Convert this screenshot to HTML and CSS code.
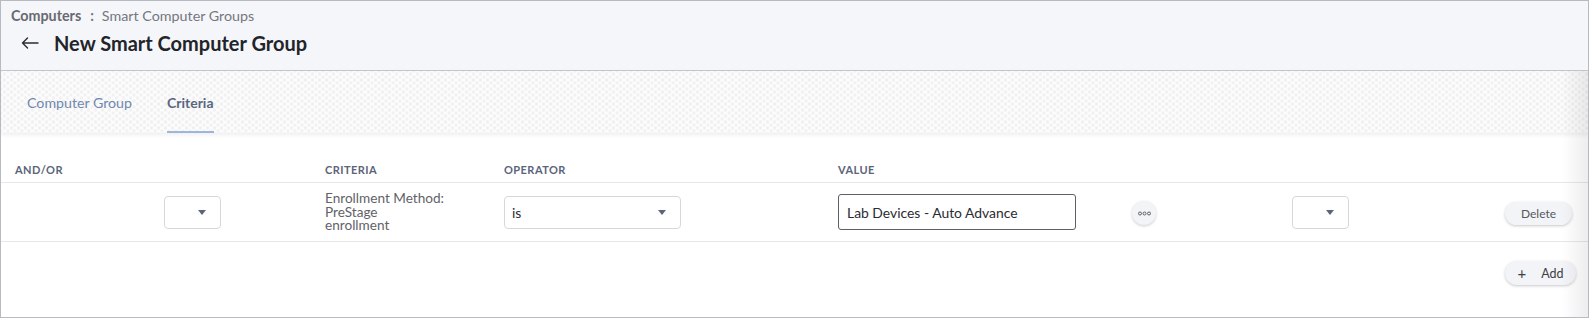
FILE: index.html
```html
<!DOCTYPE html>
<html>
<head>
    <title>New Smart Computer Group</title>
    <meta charset="UTF-8">
    <meta name="viewport" content="width=device-width, initial-scale=1.0">
    <link rel="stylesheet" href="styles.css">
</head>
<body>
    <div class="page">
        <header class="page-header">
            <div class="breadcrumb">
                <span class="crumb-root">Computers</span>
                <span class="crumb-sep">:</span>
                <span class="crumb-current">Smart Computer Groups</span>
            </div>
            <div class="title-row">
                <svg class="back-arrow" width="18" height="12" viewBox="0 0 18 12">
                    <path d="M17 6H1.5M6.5 1L1.5 6l5 5" fill="none" stroke="#2b2d31" stroke-width="1.4" stroke-linecap="round" stroke-linejoin="round"/>
                </svg>
                <h1>New Smart Computer Group</h1>
            </div>
        </header>

        <div class="content">
            <nav class="tabs">
                <a class="tab">Computer Group</a>
                <a class="tab tab-active">Criteria</a>
            </nav>

            <div class="criteria-table">
                <div class="table-head">
                    <div class="col-head">AND/OR</div>
                    <div class="col-head"></div>
                    <div class="col-head">Criteria</div>
                    <div class="col-head">Operator</div>
                    <div class="col-head">Value</div>
                    <div class="col-head"></div>
                    <div class="col-head"></div>
                    <div class="col-head"></div>
                </div>
                <div class="table-row">
                    <div class="cell"></div>
                    <div class="cell">
                        <div class="select select-small"><span class="caret"></span></div>
                    </div>
                    <div class="cell criteria-name">
                        <span>Enrollment Method:</span>
                        <span>PreStage</span>
                        <span>enrollment</span>
                    </div>
                    <div class="cell">
                        <div class="select select-wide"><span class="select-text">is</span><span class="caret"></span></div>
                    </div>
                    <div class="cell">
                        <div class="value-input">Lab Devices - Auto Advance</div>
                    </div>
                    <div class="cell">
                        <button class="more-btn">
                            <svg width="13" height="5" viewBox="0 0 13 5">
                                <circle cx="2" cy="2.5" r="1.5" fill="none" stroke="#5b5f68" stroke-width="1"/>
                                <circle cx="6.5" cy="2.5" r="1.5" fill="none" stroke="#5b5f68" stroke-width="1"/>
                                <circle cx="11" cy="2.5" r="1.5" fill="none" stroke="#5b5f68" stroke-width="1"/>
                            </svg>
                        </button>
                    </div>
                    <div class="cell">
                        <div class="select select-small"><span class="caret"></span></div>
                    </div>
                    <div class="cell">
                        <button class="pill-btn delete-btn">Delete</button>
                    </div>
                </div>
            </div>

            <div class="table-actions">
                <button class="pill-btn add-btn"><span class="plus">+</span>Add</button>
            </div>
        </div>
    </div>
</body>
</html>
```

FILE: styles.css
```css
:root {
    --header-bg: #f5f6fa;
    --frame-border: #b7bac0;
    --line: #e6e7eb;
    --text-dark: #222429;
    --text-muted: #5f6268;
    --slate: #5b6479;
    --tab-blue: #6f88ae;
    --tab-line: #9fb6da;
    --btn-bg: #f3f4f7;
}

* {
    margin: 0;
    padding: 0;
    box-sizing: border-box;
}

body {
    font-family: 'Lato', 'Liberation Sans', sans-serif;
    background: #ffffff;
    color: var(--text-dark);
}

.page {
    width: 1589px;
    height: 318px;
    border: 1px solid var(--frame-border);
    overflow: hidden;
    display: flex;
    flex-direction: column;
}

/* header */
.page-header {
    height: 70px;
    background: var(--header-bg);
    border-bottom: 1px solid #c3c7cf;
    padding: 7px 0 0 10px;
}

.breadcrumb {
    display: flex;
    align-items: center;
    font-size: 14.3px;
    line-height: 16px;
    color: #74777e;
}

.crumb-root {
    font-weight: 700;
    color: #676a71;
}

.crumb-sep {
    margin: 0 8px 0 9px;
    font-weight: 700;
}

.title-row {
    display: flex;
    align-items: center;
    margin-top: 5px;
    height: 28px;
}

.back-arrow {
    margin-left: 10px;
    margin-right: 15px;
}

h1 {
    font-size: 20px;
    font-weight: 700;
    color: #222429;
}

/* content */
.content {
    flex: 1;
    position: relative;
}

.content::after {
    content: '';
    position: absolute;
    top: 0;
    right: 0;
    bottom: 0;
    width: 26px;
    background: linear-gradient(to right, rgba(0, 0, 0, 0), rgba(0, 0, 0, 0.07));
    pointer-events: none;
}

.tabs {
    height: 62px;
    display: flex;
    gap: 35px;
    padding-left: 26px;
    background-color: #fcfcfc;
    background-image:
        radial-gradient(circle, #f1f1f1 1.4px, transparent 2px),
        radial-gradient(circle, #f1f1f1 1.4px, transparent 2px);
    background-size: 7px 6px;
    background-position: 0 0, 3.5px 3px;
    box-shadow: 0 2px 4px rgba(0, 0, 0, 0.07);
    position: relative;
}

.tab {
    display: flex;
    align-items: center;
    padding-top: 2px;
    font-size: 14.2px;
    color: var(--tab-blue);
    border-bottom: 2px solid transparent;
}

.tab-active {
    color: #5a6680;
    font-weight: 700;
    font-size: 14px;
    border-bottom-color: var(--tab-line);
}

/* table */
.table-head,
.table-row {
    display: grid;
    grid-template-columns: 149px 161px 179px 334px 294px 160px 213px 1fr;
    padding-left: 14px;
    border-bottom: 1px solid var(--line);
}

.table-head {
    height: 50px;
    align-items: end;
    padding-bottom: 5px;
}

.col-head {
    font-size: 11px;
    line-height: 14px;
    font-weight: 700;
    letter-spacing: 0.45px;
    text-transform: uppercase;
    color: var(--slate);
}

.table-row {
    height: 59px;
    align-items: center;
}

.cell {
    display: flex;
    align-items: center;
}

.criteria-name {
    flex-direction: column;
    align-items: flex-start;
    font-size: 13.6px;
    color: var(--text-muted);
    padding-top: 1px;
}

.criteria-name span {
    display: block;
    height: 13.5px;
    line-height: 13.5px;
}

.select {
    height: 33px;
    border: 1px solid #d6d8dd;
    border-radius: 4px;
    background: #ffffff;
    display: flex;
    align-items: center;
    justify-content: space-between;
    padding: 0 14px 0 7px;
}

.select-small {
    width: 57px;
    justify-content: flex-end;
}

.select-wide {
    width: 177px;
}

.select-text {
    font-size: 13.9px;
    color: #2a2c31;
}

.caret {
    width: 0;
    height: 0;
    border-left: 4.5px solid transparent;
    border-right: 4.5px solid transparent;
    border-top: 5px solid var(--slate);
    margin-top: 1px;
}

.value-input {
    width: 238px;
    height: 36px;
    border: 1px solid #5d6066;
    border-radius: 3px;
    display: flex;
    align-items: center;
    padding-left: 8px;
    font-size: 13.9px;
    color: #2a2c31;
}

.more-btn {
    width: 24px;
    height: 24px;
    border-radius: 50%;
    border: none;
    background: var(--btn-bg);
    box-shadow: 0 1px 3px rgba(0, 0, 0, 0.2);
    display: flex;
    align-items: center;
    justify-content: center;
    margin-top: 2px;
}

.pill-btn {
    font-family: 'Lato', 'Liberation Sans', sans-serif;
    height: 23px;
    border: none;
    border-radius: 12px;
    background: var(--btn-bg);
    box-shadow: 0 1px 3px rgba(0, 0, 0, 0.22);
    font-size: 12px;
    color: #55585e;
    display: flex;
    align-items: center;
    justify-content: center;
}

.delete-btn {
    width: 67px;
    margin-top: 2px;
}

.table-actions {
    display: flex;
    justify-content: flex-end;
    padding: 19px 12px 0 0;
}

.add-btn {
    width: 71px;
    height: 24px;
    font-size: 12.5px;
    color: #3e4045;
}

.plus {
    font-size: 15px;
    margin-right: 15px;
    margin-top: -1px;
}
```
